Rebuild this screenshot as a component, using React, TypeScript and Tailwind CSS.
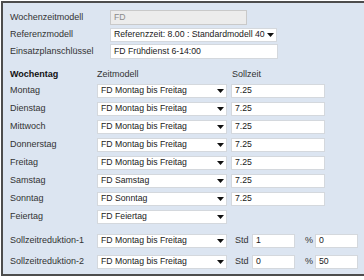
import React, { FC } from "react";

const Arrow = () => (
  <svg width="7" height="4" viewBox="0 0 7 4" className="shrink-0">
    <path d="M0 0 H7 L3.5 4 Z" fill="#111" />
  </svg>
);

const Select: FC<{ value: string; className?: string }> = ({ value, className = "" }) => (
  <div className={`flex items-center h-[14px] bg-white border border-[#d4d8dd] pl-[3px] pr-[2px] text-[8.7px] ${className}`}>
    <span className="flex-1 overflow-hidden whitespace-nowrap text-[#1a1a1a]">{value}</span>
    <Arrow />
  </div>
);

const Field: FC<{ value: string; className?: string; disabled?: boolean }> = ({ value, className = "", disabled }) => (
  <div
    className={`flex items-center h-[14px] border pl-[3px] whitespace-nowrap text-[8.7px] ${
      disabled ? "bg-[#ececec] border-[#c9c9c9] text-[#8a8a8a]" : "bg-white border-[#d4d8dd] text-[#1a1a1a]"
    } ${className}`}
  >
    {value}
  </div>
);

const days = [
  { day: "Montag", model: "FD Montag bis Freitag", soll: "7.25" },
  { day: "Dienstag", model: "FD Montag bis Freitag", soll: "7.25" },
  { day: "Mittwoch", model: "FD Montag bis Freitag", soll: "7.25" },
  { day: "Donnerstag", model: "FD Montag bis Freitag", soll: "7.25" },
  { day: "Freitag", model: "FD Montag bis Freitag", soll: "7.25" },
  { day: "Samstag", model: "FD Samstag", soll: "7.25" },
  { day: "Sonntag", model: "FD Sonntag", soll: "7.25" },
];

const App = () => {
  return (
    <div className="w-[364px] h-[280px] bg-white overflow-hidden pt-[1px] pl-[1px] text-[9px] text-[#333] [font-family:'Liberation_Sans',Arial,sans-serif]">
      <div className="h-[275px] bg-[#dce5f1] border-t-2 border-l-2 border-b-2 border-[#4d4d4d] pl-[7px] pt-[7px]">
        {/* Kopfbereich */}
        <div className="flex flex-col gap-[2px]">
          <div className="flex items-center h-[15px]">
            <span className="w-[100px]">Wochenzeitmodell</span>
            <Field value="FD" disabled className="w-[137px] h-[15px]" />
          </div>
          <div className="flex items-center h-[15px]">
            <span className="w-[100px]">Referenzmodell</span>
            <Select value="Referenzzeit: 8.00 : Standardmodell 40 Stunden" className="w-[167px]" />
          </div>
          <div className="flex items-center h-[15px]">
            <span className="w-[100px]">Einsatzplanschlüssel</span>
            <Field value="FD Frühdienst 6-14:00" className="w-[168px] h-[15px]" />
          </div>
        </div>

        {/* Wochentage */}
        <div className="flex items-center h-[14px] mt-[9px]">
          <span className="w-[87px] font-bold text-[#111]">Wochentag</span>
          <span className="w-[135px]">Zeitmodell</span>
          <span>Sollzeit</span>
        </div>
        <div className="flex flex-col gap-[4px] mt-[2px]">
          {days.map((d) => (
            <div key={d.day} className="flex items-center h-[14px]">
              <span className="w-[87px]">{d.day}</span>
              <Select value={d.model} className="w-[130px]" />
              <Field value={d.soll} className="w-[94px] ml-[4px]" />
            </div>
          ))}
          <div className="flex items-center h-[14px]">
            <span className="w-[87px]">Feiertag</span>
            <Select value="FD Feiertag" className="w-[130px]" />
          </div>
        </div>

        {/* Reduktionen */}
        <div className="flex items-center h-[14px] mt-[10px]">
          <span className="w-[87px]">Sollzeitreduktion-1</span>
          <Select value="FD Montag bis Freitag" className="w-[130px]" />
          <span className="ml-[8px] w-[17px]">Std</span>
          <Field value="1" className="w-[43px]" />
          <span className="ml-[10px] w-[10px]">%</span>
          <Field value="0" className="w-[43px]" />
        </div>
        <div className="flex items-center h-[14px] mt-[7px]">
          <span className="w-[87px]">Sollzeitreduktion-2</span>
          <Select value="FD Montag bis Freitag" className="w-[130px]" />
          <span className="ml-[8px] w-[17px]">Std</span>
          <Field value="0" className="w-[43px]" />
          <span className="ml-[10px] w-[10px]">%</span>
          <Field value="50" className="w-[43px]" />
        </div>
      </div>
    </div>
  );
};

export default App;
